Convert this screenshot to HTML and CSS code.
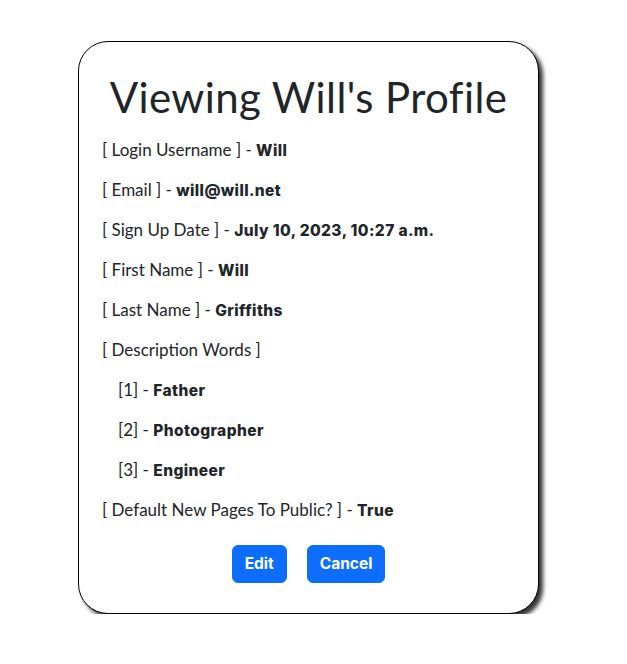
FILE: index.html
```html
<!DOCTYPE html>
<html>
<head>
<meta charset="utf-8">
<link rel="stylesheet" href="styles.css">
</head>
<body>
<div class="page">
  <div class="card">
    <h1 class="title">Viewing Will's Profile</h1>
    <p class="row">[ Login Username ] - <b>Will</b></p>
    <p class="row">[ Email ] - <b>will@will.net</b></p>
    <p class="row">[ Sign Up Date ] - <b>July 10, 2023, 10:27 a.m.</b></p>
    <p class="row">[ First Name ] - <b>Will</b></p>
    <p class="row">[ Last Name ] - <b>Griffiths</b></p>
    <p class="row">[ Description Words ]</p>
    <p class="row sub">[1] - <b>Father</b></p>
    <p class="row sub">[2] - <b>Photographer</b></p>
    <p class="row sub">[3] - <b>Engineer</b></p>
    <p class="row">[ Default New Pages To Public? ] - <b>True</b></p>
    <div class="actions">
      <button class="btn">Edit</button>
      <button class="btn">Cancel</button>
    </div>
  </div>
</div>
</body>
</html>
```
FILE: styles.css
```css
html, body {
  margin: 0;
  padding: 0;
  background: #fff;
}
body {
  font-family: Lato, "Noto Sans", sans-serif;
  color: #212529;
}
.page {
  padding-top: 41px;
  padding-left: 78px;
}
.card {
  box-sizing: border-box;
  width: 461px;
  height: 573px;
  border: 1px solid #000;
  border-radius: 30px;
  box-shadow: 4px 4px 4px rgba(0, 0, 0, 0.8);
  padding: 31px 23px 0 23px;
  background: #fff;
}
.title {
  margin: 0 0 17px 0;
  text-align: center;
  font-weight: 400;
  font-size: 42px;
  letter-spacing: 0.4px;
  line-height: 48px;
}
.row {
  margin: 0 0 16px 0;
  font-size: 17px;
  line-height: 24px;
  height: 24px;
}
.row b {
  font-family: Inter, sans-serif;
  font-weight: 800;
  font-size: 15.5px;
  letter-spacing: 0.4px;
  line-height: 1;
}
.sub {
  padding-left: 16px;
}
.actions {
  display: flex;
  justify-content: center;
  gap: 20px;
  padding-top: 7px;
}
.btn {
  background: #0d6efd;
  color: #fff;
  border: 1px solid #0d6efd;
  border-radius: 6px;
  padding: 6px 12px;
  font-family: Inter, sans-serif;
  font-weight: 700;
  font-size: 15.5px;
  line-height: 24px;
}
```
